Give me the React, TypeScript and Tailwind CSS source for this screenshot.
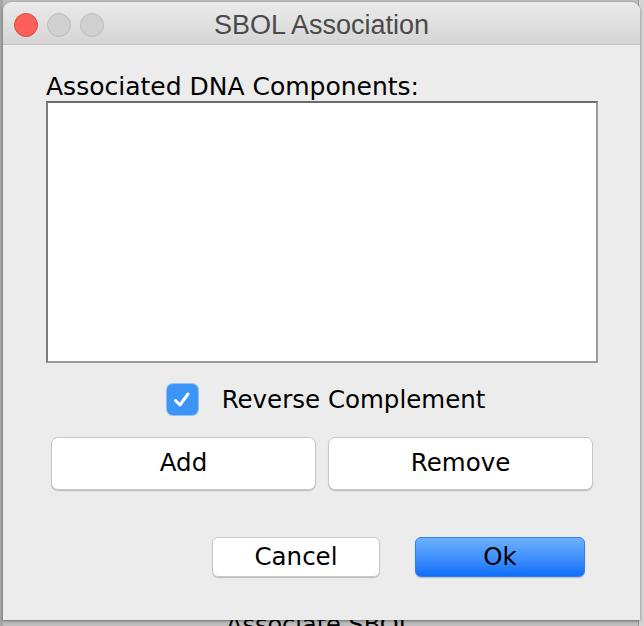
import React from "react";

export default function App() {
  const lucida = { fontFamily: '"DejaVu Sans", "Noto Sans", sans-serif' };
  return (
    <div className="relative w-[644px] h-[626px] overflow-hidden bg-[#bdbdbd]">
      {/* desktop behind the dialog */}
      <div className="absolute right-0 top-0 w-[6px] h-[626px] bg-[#d4d4d4] border-l border-[#9a9a9a]" />
      <div
        className="absolute left-[226px] top-[610px] text-[24px] leading-[30px] text-black"
        style={lucida}
      >
        Associate SBOL
      </div>
      <div className="absolute left-0 top-0 w-[3px] h-[626px] bg-[#a6a6a6]" />

      {/* window */}
      <div className="absolute left-[3px] top-[2px] w-[637px] h-[618px] rounded-t-[9px] bg-[#ececec] flex flex-col overflow-hidden shadow-[0_1px_3px_rgba(0,0,0,0.45)]">
        {/* title bar */}
        <div className="relative h-[43px] shrink-0 bg-gradient-to-b from-[#ebebeb] to-[#d5d5d5] border-b border-[#c2c2c2] flex items-center justify-center">
          <div className="absolute left-[11px] top-[11px] flex gap-[9px]">
            <div className="w-[24px] h-[24px] rounded-full bg-[#fc605c] border border-[#e0443e]" />
            <div className="w-[24px] h-[24px] rounded-full bg-[#d0d0d0] border border-[#bcbcbc]" />
            <div className="w-[24px] h-[24px] rounded-full bg-[#d0d0d0] border border-[#bcbcbc]" />
          </div>
          <div
            className="text-[27px] leading-[32px] text-[#4a4a4a] mt-[3px]"
            style={{ fontFamily: '"Liberation Sans", Arial, sans-serif' }}
          >
            SBOL Association
          </div>
        </div>

        {/* body */}
        <div className="flex flex-col pl-[43px] pr-[42px] pt-[27px]" style={lucida}>
          <div className="text-[25px] leading-[29px] text-black">
            Associated DNA Components:
          </div>
          <div className="h-[262px] bg-white border-2 border-t-[#6b6b6b] border-l-[#7a7a7a] border-r-[#9a9a9a] border-b-[#9a9a9a]" />

          <div className="flex items-center justify-center gap-[24px] mt-[21px] pl-[8px] h-[31px]">
            <div className="w-[31px] h-[31px] rounded-[6px] bg-[#3a95f7] flex items-center justify-center shadow-[0_0_0_1px_rgba(90,160,250,0.6)]">
              <svg width="24" height="24" viewBox="0 0 24 24">
                <path
                  d="M5.5 12.5 L10 17 L18 6"
                  fill="none"
                  stroke="white"
                  strokeWidth="3"
                  strokeLinecap="round"
                  strokeLinejoin="round"
                />
              </svg>
            </div>
            <div className="text-[24.5px] leading-[30px] text-black">Reverse Complement</div>
          </div>

          <div className="flex gap-[12px] mt-[22px] pl-[5px] pr-[5px]">
            <button className="w-[265px] h-[53px] rounded-[7px] bg-white border border-[#c8c8c8] shadow-[0_1px_1px_rgba(0,0,0,0.2)] text-[24.5px] text-black flex items-center justify-center">
              Add
            </button>
            <button className="w-[265px] h-[53px] rounded-[7px] bg-white border border-[#c8c8c8] shadow-[0_1px_1px_rgba(0,0,0,0.2)] text-[24.5px] text-black flex items-center justify-center">
              Remove
            </button>
          </div>

          <div className="flex gap-[35px] mt-[47px] pl-[166px]">
            <button className="w-[168px] h-[40px] rounded-[6px] bg-white border border-[#c8c8c8] shadow-[0_1px_1px_rgba(0,0,0,0.2)] text-[24.5px] text-black flex items-center justify-center">
              Cancel
            </button>
            <button className="w-[170px] h-[40px] rounded-[6px] bg-gradient-to-b from-[#6cb0fb] to-[#0a6ffb] border border-[#2f7ff0] shadow-[0_1px_1px_rgba(0,0,0,0.2)] text-[24.5px] text-black flex items-center justify-center">
              Ok
            </button>
          </div>
        </div>
      </div>
    </div>
  );
}
